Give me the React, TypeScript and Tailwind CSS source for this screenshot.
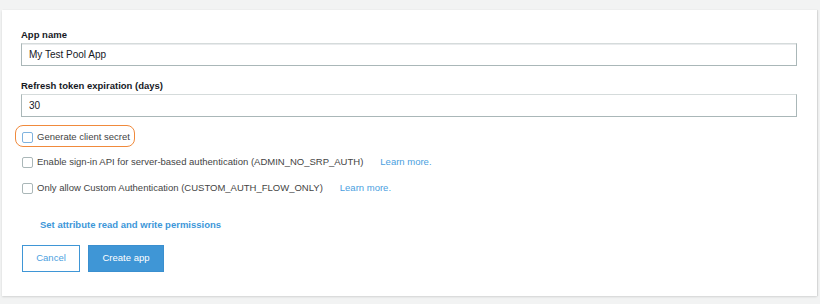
import React from "react";

function Checkbox({ focused }: { focused?: boolean }) {
  return (
    <span
      className={
        "inline-block w-[11px] h-[11px] rounded-[2px] bg-white border shrink-0 " +
        (focused ? "border-[#7fb3df]" : "border-[#aab7b8]")
      }
    />
  );
}

export default function App() {
  return (
    <div
      className="w-[820px] h-[304px] bg-[#f2f3f3] pt-[10px] pl-[2px]"
      style={{ fontFamily: '"Liberation Sans", Arial, sans-serif' }}
    >
      <div className="w-[815px] h-[286px] bg-white shadow-[0_1px_2px_rgba(0,0,0,0.12),1px_0_1px_rgba(0,0,0,0.08)] pl-[19px] pr-[20px] pt-[19px] flex flex-col">
        <label className="text-[9.5px] leading-[12px] font-bold text-[#16191f]">App name</label>
        <div className="mt-[2px] w-[776px] h-[23px] border border-[#aab7b8] border-t-[#d5dbdb] flex items-center pl-[7px] text-[10px] text-[#16191f] shadow-[inset_0_1px_0_#e9ebed]">
          My Test Pool App
        </div>
        <label className="mt-[14px] text-[9.5px] leading-[12px] font-bold text-[#16191f]">
          Refresh token expiration (days)
        </label>
        <div className="mt-[2px] w-[776px] h-[23px] border border-[#aab7b8] border-t-[#d5dbdb] flex items-center pl-[7px] text-[10px] text-[#16191f]">
          30
        </div>

        <div className="relative mt-[12px] h-[16px] flex items-center pl-[1px] text-[9.5px] text-[#444]">
          <span className="absolute left-[-6px] top-[-4px] w-[120px] h-[22px] rounded-[8px] border border-[#f08a3c] pointer-events-none" />
          <Checkbox focused />
          <span className="ml-[4px]">Generate client secret</span>
        </div>
        <div className="mt-[9px] h-[16px] flex items-center pl-[1px] text-[9.5px] text-[#444]">
          <Checkbox />
          <span className="ml-[4px]">Enable sign-in API for server-based authentication (ADMIN_NO_SRP_AUTH)</span>
          <span className="ml-[17px] text-[#4aa0e0]">Learn more.</span>
        </div>
        <div className="mt-[10px] h-[16px] flex items-center pl-[1px] text-[9.5px] text-[#444]">
          <Checkbox />
          <span className="ml-[4px]">Only allow Custom Authentication (CUSTOM_AUTH_FLOW_ONLY)</span>
          <span className="ml-[17px] text-[#4aa0e0]">Learn more.</span>
        </div>

        <div className="mt-[23px] pl-[19px] h-[12px] leading-[12px] text-[9.5px] font-bold text-[#3d97d9]">
          Set attribute read and write permissions
        </div>

        <div className="mt-[14px] flex gap-[8px] pl-[1px]">
          <button className="w-[58px] h-[27px] border border-[#3f96d6] bg-white text-[9.5px] text-[#4c9fe0]">
            Cancel
          </button>
          <button className="w-[76px] h-[27px] bg-[#3f96d6] border border-[#3a8fcf] text-[9.5px] text-white">
            Create app
          </button>
        </div>
      </div>
    </div>
  );
}
